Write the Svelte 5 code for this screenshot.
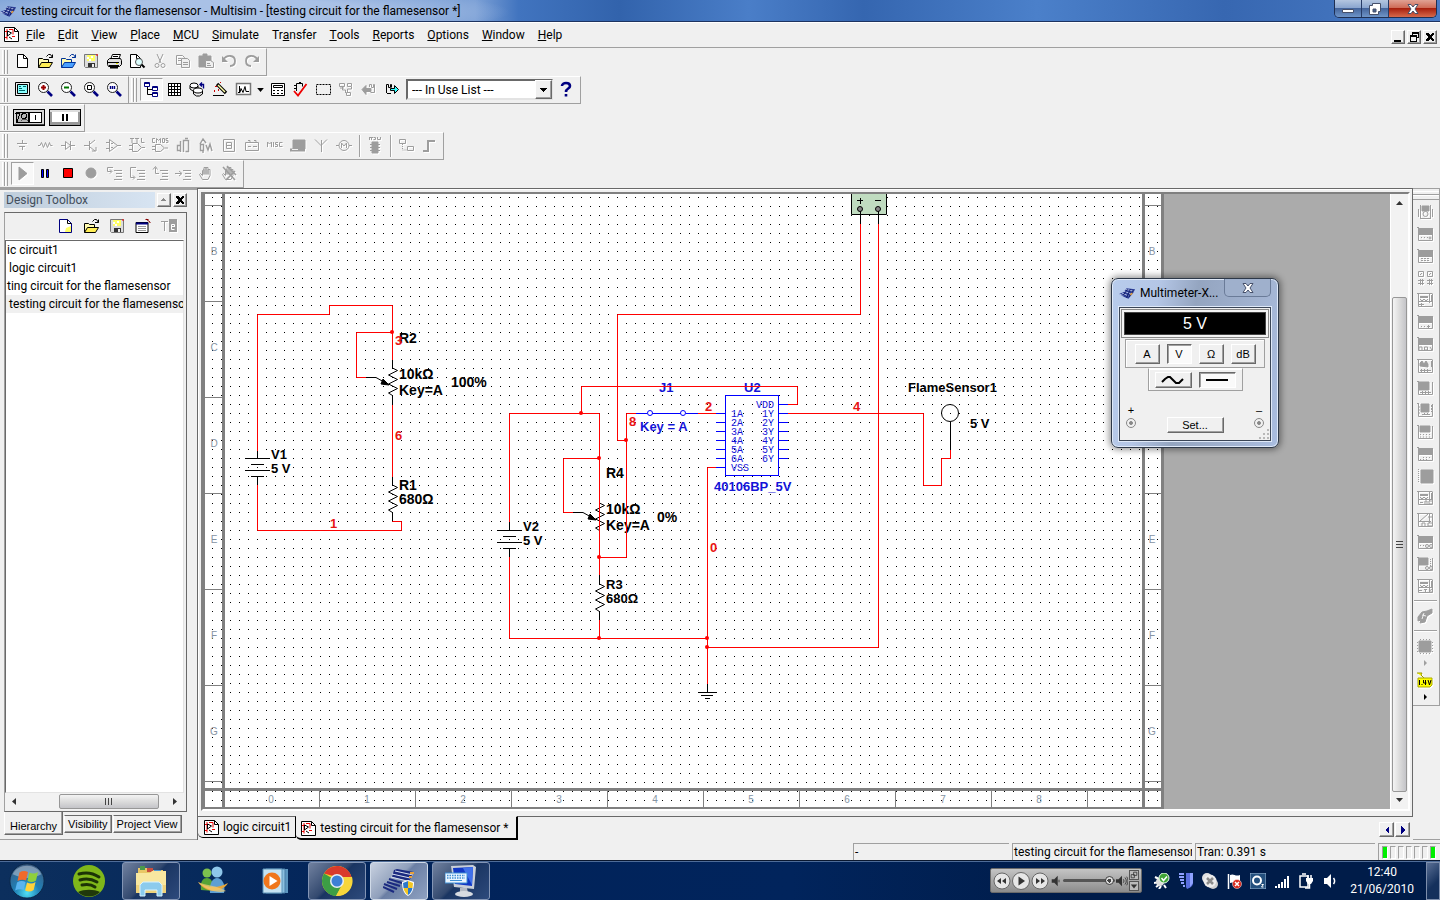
<script lang="ts">
  const menus = [
    ['', 'F', 'ile'],
    ['', 'E', 'dit'],
    ['', 'V', 'iew'],
    ['', 'P', 'lace'],
    ['', 'M', 'CU'],
    ['', 'S', 'imulate'],
    ['Tr', 'a', 'nsfer'],
    ['', 'T', 'ools'],
    ['', 'R', 'eports'],
    ['', 'O', 'ptions'],
    ['', 'W', 'indow'],
    ['', 'H', 'elp'],
  ];

  const lens = '<circle cx="6.5" cy="6.5" r="5" fill="#fff" stroke="#222"/><path d="M10.5 10.5l4.500 4.500" stroke="#000080" stroke-width="2.6"/>';
  const lines = '<path d="M8 5.5h8M10 8.5h6M10 11.5h6M8 14.5h8"/>';
  const hand = '<path d="M4.5 14.5l-3-5 1-1 2 2v-5l1.500-1v5-7h2v7-7h2v7-5h2v6l-2 4z"/>';
  const folder = (front: string, edge: string) =>
    `<path d="M1.500 14.500v-9h4l1 1h5v3" fill="#fffbb0" stroke="${edge}"/><path d="M1.500 14.500l3-5h11l-3 5z" fill="${front}" stroke="${edge}"/><path d="M9.500 3.500l2-2h2l2 3M12 4.500h3.500v-3" stroke="${edge}"/>`;
  const save = '<path d="M1.500 1.500h13v13h-12l-1-1z" fill="#ddd" stroke="#777"/><path d="M4 2h8v6h-8z" fill="#ffff66" stroke="none"/><path d="M4 4h2v2H4zM8 3h2v2H8zM6 6h2v2H6z" fill="#fff" stroke="none"/><path d="M5 10h7v4H5z" fill="#333" stroke="none"/><path d="M9 11h2v3H9z" fill="#eee" stroke="none"/><path d="M14 1v2" stroke="#f00"/>';

  const icons: Record<string, string> = {
    new: '<path d="M3.500 1.500h6l4 4v9h-10z" fill="#fff"/><path d="M9.500 1.500v4h4"/>',
    newBlue: '<path d="M2.500 1.500h8l4 4v9h-12z" fill="#fff" stroke="#000080"/><path d="M9 10l5-2v6H8z" fill="#ffff66" stroke="none"/><path d="M10.500 1.500v4h4"/>',
    open: folder('#ffee55', '#000'),
    openBlue: folder('#4aa0ff', '#003399'),
    save,
    print: '<path d="M4.500 6.500l2-5h8l-2 5" fill="#fff"/><path d="M1.500 7.500l2-2h11l1 2v4l-2 2h-11l-1-2z" fill="#ddd"/><path d="M1 9.500h12M3 12.500h10M7 3.500h5M6 5.500h5"/><path d="M4 14.500h8" stroke-width="2"/><path d="M10 10.500h2" stroke="#dd0"/>',
    preview: '<path d="M1.500 1.500h6l4 4v9h-10z" fill="#fff"/><path d="M7.500 1.500v4h4"/><circle cx="10" cy="9" r="3.500" fill="#dff" stroke="#555"/><path d="M12.500 11.500l3 3" stroke-width="2"/>',
    cut: '<path d="M5 1l4 9M11 1L7 10"/><circle cx="5" cy="12.500" r="2"/><circle cx="11" cy="12.500" r="2"/>',
    copy: '<path d="M1.500 2.500h6l2 2v7h-8z"/><path d="M6.500 5.500h6l2 2v7h-8z" fill="#f0f0f0"/><path d="M3 5.500h3M3 7.500h3M8 9.500h5M8 11.500h5"/>',
    paste: '<path d="M1 3h12v11H1z" fill="currentColor"/><path d="M5 1h4v3H5z" fill="currentColor"/><path d="M7.500 7.500h5l3 2v5h-8z" fill="#f0f0f0"/><path d="M9 10.500h3M9 12.500h4"/>',
    undo: '<path d="M2 7c4-6 12-5 12 1 0 3-2 5-5 5" stroke-width="1.800"/><path d="M1 3v6h6z" fill="currentColor" stroke="none"/>',
    redo: '<path d="M14 7C10 1 2 2 2 8c0 3 2 5 5 5" stroke-width="1.800"/><path d="M15 3v6H9z" fill="currentColor" stroke="none"/>',
    full: '<path d="M1.500 1.500h14v13h-14z" fill="#eee" stroke="#000"/><path d="M3.500 3.500h10v9h-10z" fill="#8ff"/><path d="M5 5.500h2M9 5.500h3M5 7.500h3M5 9.500h6" stroke="#066"/>',
    zoomIn: lens + '<path d="M4 6.500h5M6.500 4v5" stroke="#900" stroke-width="2"/>',
    zoomOut: lens + '<path d="M4 6.500h5" stroke="#070" stroke-width="2"/>',
    zoomArea: lens + '<path d="M4.500 4.500h4v4h-4z"/>',
    zoomFit: lens + '<path d="M4.500 5v3M6.500 5v3M8.500 5v3" stroke="#000080" stroke-width="1.400"/>',
    tree: '<path d="M1.500 1.500h5v4h-5zM9.500 5.500h5v4h-5zM9.500 11.500h5v4h-5z" stroke="#000080" fill="#fff"/><path d="M1 2.500h6M9 6.500h6M9 12.500h6" stroke="#000080"/><path d="M4.500 6v7.500H9M4.500 8.500H9"/>',
    grid: '<path d="M2.500 2.500h12v12h-12z" fill="#fff"/><path d="M2 2.500h13M2 5.500h13M2 8.500h13M2 11.500h13M2 14.500h13M2.500 2v13M5.500 2v13M8.500 2v13M11.500 2v13M14.500 2v13"/>',
    database: '<ellipse cx="5" cy="4.500" rx="4" ry="2.500" fill="#fff"/><path d="M1 5v3l3 2M9 5v2"/><ellipse cx="9" cy="9.500" rx="4.500" ry="2.500" fill="#fff"/><path d="M4.500 10v3l3 2h3l3-2v-3"/><path d="M11 3.500h3.500v4M13 1.500l-2 2 2 2" stroke="#000080" stroke-width="1.400"/>',
    wizard: '<path d="M5 3l9 9" stroke="#000" stroke-width="3.400"/><path d="M6 4l7 7" stroke="#ffa" stroke-width="1.400"/><path d="M2.500 9v2M6.500 8v2M3 5.500h2M8 1.500h1" stroke="#c00"/><path d="M1 14.500h11"/>',
    graph: '<path d="M1.500 2.500h14v11h-14z" fill="#fff" stroke="#777" stroke-width="1.500"/><path d="M3 11.500h2l1-4 2 4 2-6 1 5h3M4.500 5v6"/>',
    calc: '<path d="M2.500 2.500h13v12h-13z" fill="#fff"/><path d="M4.500 4.500h9v2h-9zM4 9.500h2M8 9.500h2M12 9.500h2M4 12.500h2M8 12.500h2M12 12.500h2"/>',
    check: '<path d="M4.500 10V2.500h6v3M4 4.500H2M4 7.500H2M7 1.500h2"/><path d="M2 10l4 4.500L14.500 3" stroke="#e00" stroke-width="1.800"/>',
    area: '<path d="M1.500 3.500h14v10h-14z" stroke-dasharray="2 1"/>',
    swap: '<path d="M1.500 2.500h5v3h-5zM9.500 2.500h4v3h-4zM8.500 11.500h4v3h-4zM4.500 6v3h3v3M13.500 6v2h-4v3M2 7h4"/>',
    back: '<path d="M1 8.500l4-4v3h5v3H5v3z" fill="currentColor"/><path d="M8.500 6V3.500h2v3h2v-3h1v8h-4"/>',
    forward: '<path d="M2.500 12V3.500h2v3h2v-3h1v3M3 12.500h4"/><path d="M6.500 7.500h4v-3l4 4-4 4v-3h-4z" fill="#3ff"/>',
    help: '<path d="M4 5c0-4 8-4 8 0 0 3-4 2-4 6M8 13v2.500" stroke="#000080" stroke-width="2.600"/>',
    source: '<path d="M3 6.500h10M5 9.500h6M8.500 3v4M8.500 10v3"/>',
    resistor: '<path d="M1 8.500h2l1.500-3 2 5 2-5 2 5 2-5 1 3h2"/>',
    diode: '<path d="M1 8.500h4M11 8.500h4M10.500 4v9M5.500 4.500v8l5-4z"/>',
    transistor: '<path d="M1 8.500h5M6.500 4v9M7 7l5-4M7 10l5 4M9 14h4v-4"/>',
    opamp: '<path d="M3.500 2.500v12l8-6zM0 5.500h3M0 11.500h3M11 8.500h4M5 6.500h2M5 10.500h2"/>',
    ttl: '<path d="M1 1.500h4M3 2v4M6 1.500h4M8 2v4M12.500 1v4.500h3M3.500 6.500v8h5l4-4-4-4zM0 8.500h3M0 12.500h3M13 10.500h3"/>',
    cmos: '<path d="M3 1.500H.500v4H3M4.500 6V1.500l2 2 2-2V6M10.500 1.500h2v4h-2zM16 1.500h-2v2h2v2h-2M3.500 7.500v7h5l4-3.500-4-3.500zM0 9.500h3M0 12.500h3M13 11h3"/>',
    misc1: '<path d="M2.500 8.500h3v5h-3zM5.500 4v11M8.500 15V3.500h5v11h-3M10 1.500h3" stroke-width="1.400"/>',
    mixed: '<path d="M2 7l3-5 3 4M2.500 7.500h3v6h-3zM8 8l2 5 2-6 2 7M5 14v2" stroke-width="1.400"/>',
    indicator: '<path d="M2.500 2.500h11v12h-11zM5.500 5.500h5v6h-5zM6 8.500h4"/>',
    power: '<path d="M1.500 5.500h13v8h-13zM4 3.500h2v2M10 3.500h2v2M4 9.500h3M9 9.500h4"/>',
    miscText: '<path d="M.500 10V5l2 2 2-2v5M6.500 5v5M11 5.500H8.500v2h2v2H8M15.500 5.500h-3v4h3" />',
    panel: '<path d="M3 3h12v9H3z" fill="currentColor"/><path d="M0 13h15" stroke-width="3"/><path d="M2 12.500h6" stroke="#f0f0f0"/>',
    antenna: '<path d="M2 2.500l6 6 6-6M8.500 3v12"/>',
    motor: '<circle cx="8" cy="8.500" r="5"/><path d="M0 8.500h3M13 8.500h3M5.500 11V6l2.500 3 2.500-3v5"/>',
    mcu: '<path d="M2.500 3V.500h2V3M6.500.500h2v2h-2M10.500 0v2.500h3V0M2 .500h4"/><path d="M5 5h6v11H5z" fill="currentColor"/><path d="M3 7.500h10M3 10.500h10M3 13.500h10"/>',
    block: '<path d="M1.500 2.500h6v4h-6zM9.500 9.500h6v4h-6z"/><path d="M4.500 7v6H9" stroke-dasharray="1 1"/>',
    bus: '<path d="M2 14h5V4h7" stroke-width="2"/>',
    play: '<path d="M5 2v13l8-6.500z" fill="currentColor"/>',
    pause: '<path d="M4.500 4.500h2v8h-2zM9.500 4.500h2v8h-2z" fill="#00f"/>',
    stop: '<path d="M3.500 3.500h9v9h-9z" fill="#f00"/>',
    record: '<circle cx="8" cy="8" r="5" fill="currentColor"/>',
    stepInto: lines + '<path d="M7 2.500H1.500v4h4M4 4.500l2 2-2 2"/>',
    stepOver: lines + '<path d="M7 2.500H1.500v10h4M4 10.500l2 2-2 2"/>',
    stepOut: lines + '<path d="M7 8.500H3.500v-6M1 4.500l2.500-3 2 3"/>',
    runTo: lines + '<path d="M0 8.500h6M4 6l3 2.500L4 11"/>',
    hand,
    handOff: hand + '<path d="M2 2l12 13M6 1l9 9M14 6L5 15" stroke-width="1.600"/>',
    saveTree: save,
    rename: '<path d="M1 4.500h12v10H1z" fill="#fff" stroke="#000"/><path d="M1 5.500h12" stroke="#000080" stroke-width="2"/><path d="M3 8.500h8M3 10.500h8M3 12.500h8" stroke="#999"/><path d="M10.500 1.500h3M11 1l4 3v1" stroke="#800"/>',
    text: '<path d="M0 3.500h7M3.500 4v9"/><path d="M8 1h8v13H8z" fill="currentColor" stroke="none"/><path d="M10 8.500h4M13.500 8V6.500h-3v5h3" stroke="#fff"/>',
    sheet: '<path d="M1.500 1.500h10l4 4v10h-14z" fill="#fff"/><path d="M11.500 1.500v4h4"/><path d="M2 5.500h2v8M6 3.500h4v5M9 10.500h3M4 3v3M2 11.500h2" stroke="#e00"/><path d="M4.500 5l4 2-4 3zM6 11l3 2"/>',
    probe: '<path d="M0 1h5L4 3l3 3" stroke="#990" fill="#ff0"/><path d="M1 6h14v7l-2 2H1z" fill="#ff0" stroke="#aa0"/><path d="M2.500 8v5M4.500 12.500h1M8.500 8v5M6.500 8v3h3M11 8l1.500 5L14 8" />',
    clip: '<path d="M1 9l4-5 5-1 5-2v4l-5 3-2 6-5 1 1-3-3 1z" fill="currentColor"/><path d="M5 7l4 1M7 5l-2 6" stroke="#f0f0f0"/>',
    chip: '<path d="M2 3h12v11H2z" fill="currentColor"/><path d="M3 1.500h11M3 15.500h11" stroke-dasharray="1 2"/><path d="M.500 4v10M15.500 4v10" stroke-dasharray="1 2"/>',
  };

  // Body of each instrument: solid screen plus the knob rows under it
  const box = '<path d="M1.500 2v12.500h14V2M0 1.500h2"/>';
  const screen = '<path d="M1 2h15v7H1z" fill="currentColor" stroke="none"/>';
  const mesh = '<path d="M1.500 1.500h14M3 4l2 2 2-2 2 2 2-2M3 7l2 2 2-2 2 2 2-2M2 9.500h13M12.500 2v9M14.500 3v7M3 6l2-2 2 2 2-2 2 2" />';
  const instruments = [
    { name: 'Multimeter', art: '<path d="M1.500 5v8M15.500 5v8M3.500 1v13M13.500 1v13"/><path d="M5 2h7v5H5z" fill="currentColor"/><circle cx="8.500" cy="10" r="2.500"/><path d="M3 14.500h11"/>' },
    { name: 'Function generator', art: box + screen + '<path d="M4 11.500h7" stroke-dasharray="1 2"/><circle cx="13" cy="12" r="1"/>' },
    { name: 'Wattmeter', art: box + screen + '<path d="M4 10.500h9M4 12.500h9" stroke-dasharray="2 1"/>' },
    { name: 'Oscilloscope', art: '<path d="M1.500 1.500h5v5h-5zM10.500 1.500h5v5h-5zM3 5l2-2M12 5l2-2M1 10.500h6M1 13.500h6M10 10.500h6M10 13.500h6M3.500 9v6M5.500 9v6M12.500 9v6M14.500 9v6"/>' },
    { name: 'Four channel oscilloscope', art: box + mesh + '<path d="M2 12.500h5M4.500 11v3"/>' },
    { name: 'Bode plotter', art: box + screen + '<path d="M4 12.500h4" stroke-dasharray="1 2"/><path d="M10 12.500h3M11.500 11v3"/>' },
    { name: 'Frequency counter', art: box + screen + '<path d="M2 14v-3h3v3M7.500 11h3v3h-3zM13 11l2 3"/>' },
    { name: 'Word generator', art: box + '<path d="M1.500 1.500h14"/><path d="M3 8V5l2-2 2 3 2-3 2 3v3z" fill="currentColor"/><path d="M3 12.500h11M4.500 11v3M7.500 11v3M10.500 11v3M14.500 3v6"/>' },
    { name: 'Logic analyzer', art: box + '<path d="M2 2h10v8H2z" fill="currentColor"/><path d="M3 12.500h11M5.500 11v3M8.500 11v3M11.500 11v3"/>' },
    { name: 'Logic converter', art: box + '<path d="M4 2h8v8H4z" fill="currentColor"/><path d="M2 4v9M5 12.500h9M7.500 11v3M10.500 11v3M14.500 3v7" stroke-dasharray="2 1"/>' },
    { name: 'IV analyzer', art: box + '<path d="M3 2h10v6H3z" fill="currentColor"/><path d="M3 10.500h11M3 13h11" stroke-dasharray="1 2"/>' },
    { name: 'Distortion analyzer', art: box + screen + '<path d="M6 11.500h9M3 13.500h9" stroke-dasharray="1 2"/>' },
    { name: 'Spectrum analyzer', art: '<path d="M4 2h12v13H4z" fill="currentColor"/><path d="M1.500 1v14" stroke-dasharray="1 1"/>' },
    { name: 'Network analyzer', art: box + mesh + '<path d="M3 12.500h3M8 14v-3h2v3M15 11h-3v3h3"/>' },
    { name: 'Agilent generator', art: box + '<path d="M1.500 1.500h14M3 9l8-7M2 9.500h12M12.500 2v9M15 5h-4M5 14v-3h3v3M15 11h-4v3h4"/>' },
    { name: 'Agilent multimeter', art: box + screen + '<path d="M3 11.500h4" stroke-dasharray="1 2"/><circle cx="10" cy="12" r="1.500"/><circle cx="14" cy="12" r="1.500"/>' },
    { name: 'Agilent oscilloscope', art: box + '<path d="M2 2h9v7H2z" fill="currentColor"/><path d="M13.500 3v7" stroke-dasharray="1 1"/><circle cx="10" cy="12" r="1.500"/><circle cx="14" cy="12" r="1.500"/>' },
    { name: 'Tektronix oscilloscope', art: box + mesh + '<path d="M2 12.500h3M7 11.500h3M8.500 11v3M12.500 11v4M15 11l-2 1.500 2 2"/>' },
  ];

  type Tool = { icon: string; label: string; off?: boolean; down?: boolean; sep?: boolean };
  const t = (icon: string, label: string, extra: Partial<Tool> = {}): Tool => ({ icon, label, ...extra });
  const off = { off: true };

  const standard = [
    t('new', 'New'), t('open', 'Open'), t('openBlue', 'Open sample'), t('save', 'Save'), t('print', 'Print'),
    t('preview', 'Print preview'), t('cut', 'Cut', off), t('copy', 'Copy', off), t('paste', 'Paste', off),
    t('undo', 'Undo', off), t('redo', 'Redo', off),
  ];
  const zoom = [
    t('full', 'Full screen'), t('zoomIn', 'Zoom in'), t('zoomOut', 'Zoom out'), t('zoomArea', 'Zoom area'), t('zoomFit', 'Zoom to fit'),
  ];
  const mainLeft = [
    t('tree', 'Design toolbox', { down: true }), t('grid', 'Spreadsheet'), t('database', 'Database manager'),
    t('wizard', 'Create component'), t('graph', 'Grapher'),
  ];
  const mainRight = [
    t('calc', 'Postprocessor'), t('check', 'Electrical rules check'), t('area', 'Capture screen area'),
    t('swap', 'Go to parent sheet', off), t('back', 'Back annotate', off), t('forward', 'Forward annotate'),
  ];
  const components = [
    t('source', 'Source', off), t('resistor', 'Basic', off), t('diode', 'Diode', off), t('transistor', 'Transistor', off),
    t('opamp', 'Analog', off), t('ttl', 'TTL', off), t('cmos', 'CMOS', off), t('misc1', 'Misc digital', off),
    t('mixed', 'Mixed', off), t('indicator', 'Indicator', off), t('power', 'Power', off), t('miscText', 'Misc', off),
    t('panel', 'Advanced peripherals', off), t('antenna', 'RF', off), t('motor', 'Electromechanical', off),
    t('mcu', 'MCU', { off: true, sep: true }), t('block', 'Hierarchical block', { off: true, sep: true }), t('bus', 'Bus', off),
  ];
  const simulation = [
    t('play', 'Run', { off: true, down: true }), t('pause', 'Pause'), t('stop', 'Stop'), t('record', 'Pause at next instruction', off),
    t('stepInto', 'Step into', off), t('stepOver', 'Step over', off), t('stepOut', 'Step out', off),
    t('runTo', 'Run to cursor', off), t('hand', 'Toggle breakpoint', off), t('handOff', 'Remove breakpoints', off),
  ];
  const treeTools = [
    t('newBlue', 'New'), t('open', 'Open'), t('saveTree', 'Save'), t('rename', 'Close'), t('text', 'Rename', off),
  ];

  const treeRows = [
    { text: 'ic circuit1', sheet: false },
    { text: 'logic circuit1', sheet: true },
    { text: 'ting circuit for the flamesensor', sheet: false },
    { text: 'testing circuit for the flamesensor', sheet: true },
  ];
  let selectedRow = $state(3);

  const dockTabs = ['Hierarchy', 'Visibility', 'Project View'];
  let dockTab = $state('Hierarchy');

  const sheets = ['logic circuit1', 'testing circuit for the flamesensor *'];
  let sheet = $state(1);

  const rowMarks = ['B', 'C', 'D', 'E', 'F', 'G'].map((name, i) => ({ name, y: 251 + i * 96 }));
  const colMarks = [0, 1, 2, 3, 4, 5, 6, 7, 8].map((name) => ({ name, x: 271 + name * 96 }));

  const wires = [
    'M257.5 451V314.5H329.5V305.5H392.5V360',
    'M392.5 332.5H356.5V377.5H366',
    'M392.5 405V477',
    'M392.5 521V521.5H401.5V530.5H257.5V485',
    'M509.5 522V413.5H599.5V575',
    'M599.5 458.5H563.5V512.5H573',
    'M581.5 413V386.5H797.5V404.5H788',
    'M599.5 557.5H626.5V413.5H636',
    'M698 413.5H716',
    'M509.5 557V638.5H707.5',
    'M599.5 620V638',
    'M716 467.5H707.5V684',
    'M707.5 647.5H878.5V224',
    'M860.5 224V314.5H617.5V440.5H626',
    'M788 413.5H923.5V485.5H941.5V458.5H950.5V450',
  ];
  const joints = [[392, 332], [581, 413], [599, 458], [626, 440], [599, 557], [599, 638], [707, 638], [707, 647]];
  const zigzag = 'l5 2.500-9 4.500 9 4.500-9 4.500 9 4.500-9 4.500 4 2.500';
  const netNames = [
    ['3', 395, 345], ['6', 395, 440], ['1', 330, 528], ['2', 705, 411],
    ['8', 629, 426], ['4', 853, 411], ['0', 710, 552],
  ];
  const bigLabels = [
    ['R2', 399, 343], ['10kΩ', 399, 379], ['Key=A', 399, 395], ['100%', 451, 387], ['R1', 399, 490], ['680Ω', 399, 504],
    ['R4', 606, 478], ['10kΩ', 606, 514], ['Key=A', 606, 530], ['0%', 657, 522],
  ];
  const labels = [
    ['V1', 271, 459], ['5 V', 271, 473], ['V2', 523, 531], ['5 V', 523, 545], ['R3', 606, 589], ['680Ω', 606, 603],
    ['FlameSensor1', 908, 392], ['5 V', 970, 428],
  ];
  const blueLabels = [['J1', 659, 392], ['U2', 744, 392], ['Key = A', 640, 431], ['40106BP_5V', 714, 491]];
  const leftPins = ['1A', '2A', '3A', '4A', '5A', '6A', 'VSS'];
  const rightPins = ['VDD', '1Y', '2Y', '3Y', '4Y', '5Y', '6Y'];

  let mode = $state('V');
  let coupling = $state('DC');
  let volume = $state(97);
</script>

{#snippet icon(name: string)}
  <svg class="ico" viewBox="0 0 17 17" aria-hidden="true">{@html icons[name]}</svg>
{/snippet}

{#snippet tools(items: Tool[])}
  {#each items as item}
    {#if item.sep}<span class="sep"></span>{/if}
    <button class="tool" class:off={item.off} class:down={item.down} aria-label={item.label}>
      {@render icon(item.icon)}
    </button>
  {/each}
{/snippet}

{#snippet logo()}
  <svg class="logo" viewBox="0 0 18 16" aria-hidden="true">
    <path d="M0 9l5-2 3-4 9 1-2 4-5 6-5-2z" fill="#2b3c96" />
    <path d="M0 9l5 2M3 8l7 3M5 6l8 3M7 4l8 2" stroke="#b9c6e8" fill="none" />
    <path d="M9 4l-5 7M12 4l-4 9M15 5l-4 7" stroke="#101c66" fill="none" />
    <path d="M12 10l2-2" stroke="#e8a13a" stroke-width="1.500" />
  </svg>
{/snippet}

<div class="screen">
  <header class="titlebar">
    {@render logo()}
    <h1>testing circuit for the flamesensor - Multisim - [testing circuit for the flamesensor *]</h1>
    <div class="caption">
      <button aria-label="Minimize"><svg viewBox="0 0 14 14"><path d="M1.500 7.500h11v3h-11z" /></svg></button>
      <button aria-label="Restore"><svg viewBox="0 0 14 14"><path d="M4.500 1.500h8v8h-2v3h-9v-9h3z" /><path class="hole" d="M5 7h3v3H5z" /></svg></button>
      <button class="close" aria-label="Close"><svg viewBox="0 0 14 14"><path d="M2 2.500h3l2 2.500 2-2.500h3L9 7l3 4.500H9L7 9l-2 2.500H2L5 7z" /></svg></button>
    </div>
  </header>

  <nav class="menubar">
    <span class="doc">{@render icon('sheet')}</span>
    {#each menus as [pre, key, post]}
      <button class="menu">{pre}<u>{key}</u>{post}</button>
    {/each}
    <div class="child">
      <button class="raised" aria-label="Minimize sheet"><svg viewBox="0 0 12 12"><path d="M2 9h7v2H2z" /></svg></button>
      <button class="raised" aria-label="Restore sheet"><svg viewBox="0 0 12 12"><path d="M4 1h7v6H9v4H2V4h2zM5 3v1h4v2h1V3zM3 6v4h5V6z" fill-rule="evenodd" /></svg></button>
      <button class="raised" aria-label="Close sheet"><svg viewBox="0 0 12 12"><path d="M2 2h2l2 2 2-2h2v1L7.500 6 10 9v1H8L6 8l-2 2H2V9l2.500-3L2 3z" /></svg></button>
    </div>
  </nav>

  <div class="row"><div class="bar" role="toolbar" aria-label="Standard">{@render tools(standard)}</div></div>
  <div class="row">
    <div class="bar" role="toolbar" aria-label="View">{@render tools(zoom)}</div>
    <div class="bar" role="toolbar" aria-label="Main">
      {@render tools(mainLeft)}
      <button class="more" aria-label="Grapher list"><svg viewBox="0 0 5 3"><path d="M0 0h5L2.500 3z" /></svg></button>
      {@render tools(mainRight)}
      <div class="combo">
        <select aria-label="In use list"><option>--- In Use List ---</option></select>
        <span class="drop raised"><svg viewBox="0 0 7 4"><path d="M0 0h7L3.500 4z" /></svg></span>
      </div>
      {@render tools([t('help', 'Help')])}
    </div>
  </div>
  <div class="row">
    <div class="bar switches" role="toolbar" aria-label="Simulation switch">
      <button aria-label="Run switch">
        <svg viewBox="0 0 32 17"><path d="M.500.500h31v16H.500z" fill="#d8d8d8" stroke="#000" /><path d="M1 15.500h30" stroke="#444" /><path d="M3.500 3.500h12v10h-12z" fill="#b8b8b8" stroke="#000" /><path d="M4 13l3-9M2 4h4" stroke="#000" /><circle cx="11" cy="7" r="2.500" fill="none" stroke="#000" /><path d="M8 12l2-2h3l2 2" fill="none" stroke="#555" /><path d="M16.500 3.500h12v10h-12z" fill="#fff" stroke="#000" /><path d="M22.500 6v5" stroke="#000" /></svg>
      </button>
      <button aria-label="Pause switch">
        <svg viewBox="0 0 32 17"><path d="M.500.500h31v16H.500z" fill="#999" stroke="#000" /><path d="M1 1h30v2H1z" fill="#ddd" /><path d="M3 3h26v10H3z" fill="#fff" /><path d="M13 5h2v7h-2zM17 5h2v7h-2z" fill="#000" /></svg>
      </button>
    </div>
  </div>
  <div class="row"><div class="bar" role="toolbar" aria-label="Components">{@render tools(components)}</div></div>
  <div class="row"><div class="bar" role="toolbar" aria-label="Simulation">{@render tools(simulation)}</div></div>

  <main class="work">
    <aside class="dock">
      <div class="dock-title">
        <h2>Design Toolbox</h2>
        <button class="raised" aria-label="Collapse"><svg viewBox="0 0 12 12"><path d="M3 7h5L5.500 4z" fill="#888" /></svg></button>
        <button class="raised" aria-label="Close toolbox"><svg viewBox="0 0 12 12"><path d="M2 2h2l2 2 2-2h2v1L7.500 6 10 9v1H8L6 8l-2 2H2V9l2.500-3L2 3z" /></svg></button>
      </div>
      <div class="dock-box">
        <div class="dock-tools" role="toolbar" aria-label="Toolbox">{@render tools(treeTools)}</div>
        <ul class="tree">
          {#each treeRows as row, i}
            <li>
              <button class:sheet={row.sheet} class:selected={i === selectedRow} onclick={() => (selectedRow = i)}>{row.text}</button>
            </li>
          {/each}
        </ul>
        <div class="hscroll">
          <svg viewBox="0 0 4 7"><path d="M4 0v7L0 3.500z" /></svg>
          <span class="thumb"><i></i><i></i><i></i></span>
          <svg viewBox="0 0 4 7"><path d="M0 0v7l4-3.500z" /></svg>
        </div>
      </div>
      <div class="dock-tabs" role="tablist">
        {#each dockTabs as name}
          <button role="tab" aria-selected={name === dockTab} class:current={name === dockTab} onclick={() => (dockTab = name)}>{name}</button>
        {/each}
      </div>
    </aside>

    <section class="mdi">
      <div class="frame">
        <div class="canvas">
          <svg class="page" viewBox="203 194 961 615">
            <defs>
              <pattern id="dots" x="5" y="8" width="9" height="9" patternUnits="userSpaceOnUse">
                <rect width="1" height="1" fill="#000" />
              </pattern>
            </defs>
            <rect x="203" y="194" width="961" height="615" fill="#fff" />
            <rect x="205" y="194" width="956" height="613" fill="url(#dots)" />
            <g class="border">
              <path d="M203 194h2v615h-2zM222 194h3v613h-3zM1142 194h3v613h-3zM1161 194h3v615h-3zM203 788h959v3H203zM203 807h961v2H203z" />
              {#each [205, 301, 397, 493, 589, 685, 781] as y}
                <path d="M205 {y}h17v1h-17zM1145 {y}h16v1h-16z" />
              {/each}
              {#each [319, 415, 511, 607, 703, 799, 895, 991, 1087] as x}
                <path d="M{x} 791h1v16h-1z" />
              {/each}
            </g>
            <g class="mark">
              {#each rowMarks as mark}
                <text x="214" y={mark.y + 4}>{mark.name}</text>
                <text x="1152" y={mark.y + 4}>{mark.name}</text>
              {/each}
              {#each colMarks as mark}
                <text x={mark.x} y="803">{mark.name}</text>
              {/each}
            </g>

            <g class="part">
              <path d="M851.5 190V214.500H886.500V190z" fill="#c0dcc0" />
              <path d="M857 200.500h6M860.500 198v6M875 200.500h6M860.500 209V224M878.500 209V224" />
              <circle cx="860" cy="209" r="2.500" fill="#888" />
              <circle cx="878" cy="209" r="2.500" fill="#888" />
              {#each [[0, 0], [252, 72]] as [dx, dy]}
                <path transform="translate({dx} {dy})" d="M257.5 450V458M245 458.500H270M251 464.500H264M245 470.500H270M251 476.500H264M257.5 477V485" />
              {/each}
              <path d="M392.5 360V368{zigzag}V405M392.5 477V485{zigzag}V521M599.5 575V584{zigzag}V620M599.5 503{zigzag}" />
              {#each [[0, 0], [207, 135]] as [dx, dy]}
                <g transform="translate({dx} {dy})">
                  <path d="M366 377.500H376L384 382" />
                  <path class="arrow" d="M383 379L389 385L381 384z" />
                </g>
              {/each}
              <path d="M707.5 684V692M698 692.500H717M701 695.500H713M705 698.500H710" />
              <path d="M950.5 422V450" />
              <circle cx="950" cy="413" r="8.500" fill="none" />
            </g>
            <g class="labels big">
              {#each bigLabels as [text, x, y]}<text {x} {y}>{text}</text>{/each}
            </g>
            <g class="labels">
              {#each labels as [text, x, y]}<text {x} {y}>{text}</text>{/each}
            </g>
            <g class="labels blue">
              {#each blueLabels as [text, x, y]}<text {x} {y}>{text}</text>{/each}
            </g>
            <g class="labels net">
              {#each netNames as [text, x, y]}<text {x} {y}>{text}</text>{/each}
            </g>
            <g class="chip">
              <rect x="725.5" y="395.5" width="53" height="80" />
              <path d="M636 413.500H647M652 413.500H681M686 413.500H698" />
              {#each leftPins as pin, i}
                <path d="M716 {413.5 + i * 9}H725" />
                <text x="731" y={417 + i * 9}>{pin}</text>
              {/each}
              {#each rightPins as pin, i}
                <path d="M779 {404.5 + i * 9}H788" />
                <text class="end" x="774" y={408 + i * 9}>{pin}</text>
              {/each}
            </g>
            <g class="wire">
              {#each wires as d}<path {d} />{/each}
              {#each joints as [x, y]}<circle cx={x} cy={y} r="2" />{/each}
            </g>
            <g class="contact">
              <circle cx="650" cy="413" r="2.500" />
              <circle cx="683" cy="413" r="2.500" />
            </g>
          </svg>
          <div class="vscroll">
            <svg viewBox="0 0 7 4"><path d="M0 4h7L3.500 0z" /></svg>
            <span class="thumb"><i></i><i></i><i></i></span>
            <svg viewBox="0 0 7 4"><path d="M0 0h7L3.500 4z" /></svg>
          </div>
        </div>
      </div>
      <div class="sheets">
        <div class="sheet-tabs" role="tablist">
          {#each sheets as name, i}
            <button role="tab" aria-selected={i === sheet} class:current={i === sheet} onclick={() => (sheet = i)}>
              {@render icon('sheet')}{name}
            </button>
          {/each}
        </div>
        <div class="pager">
          <button class="raised" aria-label="Previous sheet"><svg viewBox="0 0 12 12"><path d="M8 2v8L4 6z" fill="#000080" /></svg></button>
          <button class="raised" aria-label="Next sheet"><svg viewBox="0 0 12 12"><path d="M4 2v8l4-4z" fill="#000080" /></svg></button>
        </div>
      </div>

      <div class="meter" role="dialog" aria-label="Multimeter-XMM1">
        <div class="meter-title">
          {@render logo()}
          <span>Multimeter-X...</span>
          <button aria-label="Close multimeter"><svg viewBox="0 0 14 14"><path d="M2 2.500h3l2 2.500 2-2.500h3L9 7l3 4.500H9L7 9l-2 2.500H2L5 7z" /></svg></button>
        </div>
        <div class="meter-body">
          <output class="display">5 V</output>
          <div class="group">
            {#each ['A', 'V', 'Ω', 'dB'] as name}
              <button class="raised" class:pressed={mode === name} onclick={() => (mode = name)}>{name}</button>
            {/each}
          </div>
          <div class="group wave">
            <button class="raised" class:pressed={coupling === 'AC'} aria-label="AC" onclick={() => (coupling = 'AC')}>
              <svg viewBox="0 0 24 10"><path d="M1 7l3-3 3-2h2l3 3 3 3h3l4-4" /></svg>
            </button>
            <button class="raised" class:pressed={coupling === 'DC'} aria-label="DC" onclick={() => (coupling = 'DC')}>
              <svg viewBox="0 0 24 10"><path d="M1 5h22" /></svg>
            </button>
          </div>
          <div class="terminals">
            <div class="terminal"><span>+</span><svg viewBox="0 0 12 12"><circle cx="6" cy="6" r="4.500" /><circle class="pin" cx="6" cy="6" r="1.500" /></svg></div>
            <button class="raised set">Set...</button>
            <div class="terminal"><span>–</span><svg viewBox="0 0 12 12"><circle cx="6" cy="6" r="4.500" /><circle class="pin" cx="6" cy="6" r="1.500" /></svg></div>
          </div>
          <svg class="grip" viewBox="0 0 12 12"><path d="M9 1h2v2H9zM9 5h2v2H9zM9 9h2v2H9zM5 5h2v2H5zM5 9h2v2H5zM1 9h2v2H1z" /></svg>
        </div>
      </div>
    </section>

    <div class="instruments">
      <div class="inst-bar" role="toolbar" aria-label="Instruments">
        {#each instruments as item}
          <button class="inst" aria-label={item.name}><svg class="ico" viewBox="0 0 17 17">{@html item.art}</svg></button>
        {/each}
        <hr />
        <button class="inst" aria-label="Current probe">{@render icon('clip')}</button>
        <hr />
        <button class="inst" aria-label="LabVIEW instruments">{@render icon('chip')}</button>
        <button class="fly" aria-label="LabVIEW list"><svg viewBox="0 0 3 6"><path d="M0 0v6l3-3z" /></svg></button>
        <button class="inst live" aria-label="Measurement probe">{@render icon('probe')}</button>
        <button class="fly live" aria-label="Probe list"><svg viewBox="0 0 3 6"><path d="M0 0v6l3-3z" /></svg></button>
      </div>
    </div>
  </main>

  <footer class="status">
    <span class="pane">-</span>
    <span class="pane">testing circuit for the flamesensor:</span>
    <span class="pane">Tran: 0.391 s</span>
    <span class="pane leds">
      {#each [true, false, false, false, false, false, true] as lit}<i class:lit></i>{/each}
    </span>
  </footer>

  <div class="taskbar">
    <button class="start" aria-label="Start">
      <svg viewBox="0 0 40 40">
        <defs>
          <radialGradient id="orb" cx="50%" cy="85%" r="80%">
            <stop offset="0" stop-color="#4fe0f5" /><stop offset=".45" stop-color="#1f7fb5" /><stop offset="1" stop-color="#3c5f86" />
          </radialGradient>
        </defs>
        <circle cx="20" cy="20" r="18" fill="url(#orb)" stroke="#0b2748" />
        <path d="M5 13c5-12 25-12 30 0-8 5-20 5-30 0z" fill="#fff" opacity=".35" />
        <path d="M12 11c3-2 6-2 9-.500l-2 9c-3-1.500-6-1-9 .500z" fill="#f06a2a" />
        <path d="M22.500 11c3 1.500 6 1.500 9-.500l-2 9c-3 2-6 2-9 .500z" fill="#8fd03c" />
        <path d="M9.500 21.500c3-2 6-2 9-.500l-2 8.500c-3-1.500-6-1-9 .500z" fill="#59b4f0" />
        <path d="M20 21.500c3 1.500 6 1.500 9-.500l-2 8.500c-3 2-6 2-9 .500z" fill="#ffd23a" />
      </svg>
    </button>
    <button class="app first" aria-label="Spotify">
      <svg viewBox="0 0 32 32"><circle cx="16" cy="16" r="16" fill="#7fb71a" /><path d="M6 9c7-2 14-1 20 3M7 15c6-2 12-1 17 2M9 20c5-1 9-1 13 2" stroke="#1c3306" stroke-width="3" stroke-linecap="round" fill="none" /><path d="M5 27c6-3 16-3 22 0-6 6-16 6-22 0z" fill="#20380a" /></svg>
    </button>
    <button class="app open" aria-label="Windows Explorer">
      <svg viewBox="0 0 32 32"><path d="M3 3h9l2 2h14v22H3z" fill="#e9c766" /><path d="M5 1h5v4H5z" fill="#4a9a4a" /><path d="M12 3h6v4h-6z" fill="#c94d3d" /><path d="M19 5h7v4h-7z" fill="#4f9ad8" /><path d="M1 8h14l2-2h14v22H1z" fill="#f8e7a0" /><path d="M1 20h30v8H1z" fill="#efd27a" /><path d="M5 31V20l3-3h16l3 3v11h-5v-6H10v6z" fill="#8ccbed" stroke="#d8f2ff" /></svg>
    </button>
    <button class="app" aria-label="Messenger">
      <svg viewBox="0 0 32 32"><circle cx="10" cy="8" r="4.500" fill="#7cc04e" /><path d="M4 25c-1-9 2-12 6-12s7 4 7 13z" fill="#56a336" /><circle cx="20" cy="7" r="5.500" fill="#8fc7ea" /><path d="M13 28c-1-10 3-15 7-15s9 5 7 15z" fill="#5d9fd3" /><path d="M1 17c9 6 19 7 30 1-5 9-21 12-30-1z" fill="#e6a63a" /><path d="M1 17c9 4 18 3 28 9-8 3-20-1-28-9z" fill="#f4cf73" opacity=".7" /></svg>
    </button>
    <button class="app" aria-label="Media Player">
      <svg viewBox="0 0 32 32"><path d="M10 4h19v24H10z" fill="#5c96c0" /><path d="M7 4h19v24H7z" fill="#8cc0e0" stroke="#487fa8" /><path d="M4 4h19v24H4z" fill="#c5e3f3" stroke="#5c93b8" /><circle cx="13" cy="16" r="8.500" fill="#f0761c" /><path d="M10.500 11v10l8-5z" fill="#fff" /></svg>
    </button>
    <button class="app open" aria-label="Chrome">
      <svg viewBox="0 0 32 32"><circle cx="16" cy="16" r="15" fill="#f7cf2b" /><path d="M3 8.500A15 15 0 0130.500 12H16z" fill="#d93a2b" /><path d="M3 8.500A15 15 0 0015 31l6-11-5-4z" fill="#3c9e45" /><path d="M31 12a15 15 0 01-16 19l6-11-1-8z" fill="#f7d63b" /><circle cx="16" cy="16" r="7" fill="#e8eef4" /><circle cx="16" cy="16" r="5.500" fill="#3d7fd6" /></svg>
    </button>
    <button class="app open active" aria-label="Multisim">
      <svg viewBox="0 0 32 32"><path d="M11 5l3-1 17 3-5 9-17-4z" fill="#1b2a80" /><path d="M9 9l18 4M8 12l16 4M12 6l18 4" stroke="#d8dff0" stroke-width="1" fill="none" /><path d="M6 14l13 4M4 17l13 4M1 19l13 5M0 22l11 5" stroke="#1b2a80" stroke-width="2" fill="none" /><path d="M27 8h4M26 12h3" stroke="#e8a13a" stroke-width="2" /><path d="M19 17l6-2 6 2c0 7-2 12-6 14-4-2-6-7-6-14z" fill="#fff" /><path d="M20 18l5-2v7h-4.500z" fill="#2c78cc" /><path d="M25 16l5 2-.500 5H25z" fill="#f3c622" /><path d="M20.500 23H25v7c-2-1-4-4-4.500-7z" fill="#f3c622" /><path d="M25 23h4.500c-.500 3-2.500 6-4.500 7z" fill="#2c78cc" /></svg>
    </button>
    <button class="app open" aria-label="Remote keyboard">
      <svg viewBox="0 0 32 32"><path d="M6 1l22-1 3 2-2 22-20-2z" fill="#c9cfd8" /><path d="M8 3l20-1-1 19-17-2z" fill="#1238c4" /><path d="M18 3l10-1-1 18z" fill="#3f70ea" /><path d="M15 23h7l1 5h-8z" fill="#b4bac4" /><ellipse cx="19" cy="29" rx="9" ry="3" fill="#d7dbe1" /><path d="M0 8h22v10H0z" fill="#eaf5ff" stroke="#3f8fd4" /><path d="M2 10.500h18M2 13h18" stroke="#3f8fd4" stroke-width="1.500" stroke-dasharray="1.500 1" /><path d="M5 15.500h12" stroke="#3f8fd4" /></svg>
    </button>

    <div class="tray">
      <div class="media">
        <button aria-label="Previous"><svg viewBox="0 0 18 18"><circle cx="9" cy="9" r="8" /><path d="M8 6v6L4 9zM13 6v6L9 9z" /></svg></button>
        <button aria-label="Play"><svg viewBox="0 0 18 18"><circle cx="9" cy="9" r="8.500" /><path d="M6.500 4.500v9L13 9z" /></svg></button>
        <button aria-label="Next"><svg viewBox="0 0 18 18"><circle cx="9" cy="9" r="8" /><path d="M5 6v6l4-3zM10 6v6l4-3z" /></svg></button>
        <svg class="spk" viewBox="0 0 14 14"><path d="M2 5h3l4-4v12L5 9H2z" /><path class="arc" d="M10.500 5.500v3" /></svg>
        <input type="range" aria-label="Volume" min="0" max="100" bind:value={volume} />
        <svg class="spk" viewBox="0 0 14 14"><path d="M0 5h3l4-4v12L3 9H0z" /><path class="arc" d="M8.500 5c1 1 1 3 0 4M10.500 3c2 2 2 6 0 8M12.500 2c2 3 2 7 0 10" /></svg>
        <div class="mini">
          <button aria-label="Restore player"><svg viewBox="0 0 10 10"><path class="arc" d="M4.500 1.500h4v4h-4zM1.500 4.500h4v4h-4z" /></svg></button>
          <button aria-label="Player menu"><svg viewBox="0 0 10 10"><path d="M1 3h8L5 8z" /></svg></button>
        </div>
      </div>
      <svg class="note" viewBox="0 0 16 16"><path d="M1 4l4 2M2 14l4-3M5 16l2-3M12 15l-2-3M0 10l5-1" stroke="#fff" stroke-width="2" /><ellipse cx="6" cy="9" rx="4" ry="4" fill="#ddd" /><circle cx="10" cy="5" r="5" fill="#3fa535" stroke="#e8ffe8" /><path d="M7.500 5l2 2.500 3.500-4" stroke="#fff" stroke-width="1.500" fill="none" /></svg>
      <svg class="note" viewBox="0 0 16 16"><path d="M1 1h5M1 4h5M2 7h4M3 10h3M5 13h2" stroke="#8ea0ff" stroke-width="2" /><path d="M8 0h7v10c0 3-3 5-6 6l-1-2z" fill="#5a6fe0" /><path d="M12 0h3v10l-3 4z" fill="#8fa2ff" /></svg>
      <svg class="note" viewBox="0 0 16 16"><circle cx="5" cy="5" r="5" fill="#e0e0e0" /><circle cx="11" cy="11" r="5" fill="#cfcfcf" /><circle cx="8" cy="8" r="6.500" fill="#ececec" /><path d="M5 5l6 6M11 5l-6 6" stroke="#8b8b8b" stroke-width="2.500" /></svg>
      <svg class="note" viewBox="0 0 16 16"><path d="M2.500 1v15" stroke="#fff" stroke-width="1.500" /><path d="M4 2c4-2 5 2 10 0v8c-5 2-6-2-10 0z" fill="#fff" /><circle cx="11" cy="11" r="4.500" fill="#d8281c" stroke="#fff" stroke-width=".500" /><path d="M9 9l4 4M13 9l-4 4" stroke="#fff" stroke-width="1.500" /></svg>
      <svg class="note" viewBox="0 0 16 16"><path d="M0 0h16v16H0z" fill="#24507e" stroke="#9db8d4" /><circle cx="7" cy="7.500" r="4" fill="none" stroke="#fff" stroke-width="2" /><path d="M11.500 11.500h2l-2 2.500h2" stroke="#fff" fill="none" /></svg>
      <svg class="note" viewBox="0 0 16 16"><path d="M2 13v2M5 11v4M8 9v6M11 6v9M14 3v12" stroke="#fff" stroke-width="2" /></svg>
      <svg class="note" viewBox="0 0 16 16"><path d="M2 3h8v11H2zM4 1h4" fill="none" stroke="#fff" stroke-width="1.500" /><path d="M8 5h7v3l-2 3h-3L8 8z" fill="#fff" /><path d="M10 2v3M13 2v3M11.500 11v4H7" stroke="#fff" fill="none" stroke-width="1.500" /></svg>
      <svg class="note" viewBox="0 0 16 16"><path d="M2 5h3l4-4v14l-4-4H2z" fill="#fff" /><path d="M11.500 5c1.500 2 1.500 4 0 6" stroke="#fff" fill="none" stroke-width="1.500" /></svg>
      <div class="clock"><time>12:40</time><time>21/06/2010</time></div>
      <button class="peek" aria-label="Show desktop"></button>
    </div>
  </div>
</div>

<style>
  :global(body) {
    background: #f0f0f0;
  }
  .screen {
    --face: #f0f0f0;
    --shadow: #a0a0a0;
    --dark: #696969;
    display: flex;
    flex-direction: column;
    min-height: 100vh;
    background: var(--face);
    color: #000;
    font-family: Roboto, 'Liberation Sans', sans-serif;
    font-size: 12px;
    line-height: 16px;
    white-space: nowrap;
    overflow: hidden;
  }
  .screen * {
    box-sizing: border-box;
  }
  button {
    display: flex;
    align-items: center;
    justify-content: center;
    padding: 0;
    border: 0;
    background: none;
    color: inherit;
    font: inherit;
  }
  h1,
  h2,
  ul {
    margin: 0;
    padding: 0;
    font: inherit;
    list-style: none;
  }
  .raised {
    width: 14px;
    height: 14px;
    background: var(--face);
    border: 1px solid;
    border-color: #fff var(--dark) var(--dark) #fff;
    box-shadow: inset -1px -1px var(--shadow);
  }
  .raised svg {
    width: 12px;
    height: 12px;
    shape-rendering: crispEdges;
  }
  .ico {
    width: 17px;
    height: 17px;
    fill: none;
    stroke: currentColor;
  }

  .titlebar {
    display: flex;
    height: 22px;
    padding-right: 3px;
    background:
      radial-gradient(ellipse 280px 26px at 230px 12px, #a9c1e6 50%, transparent),
      linear-gradient(90deg, #7fa3d8 0, #7da1d6 33%, #4174bf 36%, #3263ac 43%, #4a7ec8 52%, #3566b0 60%, #4b80ca 72%, #3767b1 85%, #4a7cc6 100%);
    border-bottom: 1px solid #1d3360;
  }
  .logo {
    width: 17px;
    height: 16px;
  }
  .titlebar .logo {
    margin-top: 3px;
  }
  h1 {
    flex: 1;
    margin-left: 4px;
    line-height: 22px;
  }
  .caption {
    display: flex;
    height: 18px;
    border: 1px solid #1f2f52;
    border-top: 0;
    border-radius: 0 0 5px 5px;
    overflow: hidden;
  }
  .caption button {
    width: 27px;
    background: linear-gradient(#b4c6e0, #8ba6cf 45%, #45659c 50%, #6f95c8);
    border-right: 1px solid #263b66;
  }
  .caption .close {
    width: 47px;
    border: 0;
    background: linear-gradient(#e0a294, #cf6c58 45%, #a8200e 50%, #d66a4c);
  }
  .caption svg,
  .meter-title button svg {
    width: 14px;
    height: 14px;
    fill: #fff;
    stroke: #46506a;
  }
  .caption .hole {
    fill: #46628f;
  }

  .menubar {
    display: flex;
    align-items: center;
    gap: 13px;
    height: 26px;
    padding: 0 3px 1px;
    border-top: 1px solid #fff;
    border-bottom: 1px solid var(--shadow);
  }
  .doc {
    display: flex;
    margin-right: -7px;
  }
  .child {
    display: flex;
    gap: 2px;
    margin: 4px 0 0 auto;
  }

  .row {
    display: flex;
    height: 28px;
  }
  .bar {
    position: relative;
    display: flex;
    align-items: center;
    padding: 0 2px 1px 11px;
    border: 1px solid;
    border-color: #fff var(--shadow) var(--shadow) transparent;
    border-left: 0;
  }
  .bar::before {
    content: '';
    position: absolute;
    left: 2px;
    top: 1px;
    bottom: 1px;
    width: 6px;
    background: linear-gradient(90deg, #fff 1px, #f0f0f0 1px, #f0f0f0 2px, #a0a0a0 2px) 0 0 / 3px 100%;
  }
  .tool {
    width: 23px;
    height: 23px;
  }
  .off,
  .inst {
    color: #9d9d9d;
  }
  .off .ico {
    filter: drop-shadow(1px 1px 0 #fff);
  }
  .down {
    background: #f8f8f8;
    border: 1px solid;
    border-color: var(--shadow) #fff #fff var(--shadow);
  }
  .sep {
    width: 2px;
    height: 22px;
    margin: 0 3px;
    border-left: 1px solid var(--shadow);
    border-right: 1px solid #fff;
  }
  .more {
    width: 11px;
    height: 22px;
  }
  .more svg {
    width: 7px;
    height: 4px;
  }
  .combo {
    position: relative;
    margin: 0 2px;
  }
  .combo select {
    display: block;
    appearance: none;
    width: 147px;
    height: 21px;
    padding: 0 4px;
    background: #fff;
    border: 2px solid;
    border-color: var(--dark) #e3e3e3 #e3e3e3 var(--dark);
    border-radius: 0;
    color: #000;
    font: inherit;
  }
  .drop {
    position: absolute;
    display: flex;
    align-items: center;
    justify-content: center;
    top: 1px;
    right: 1px;
    width: 17px;
    height: 19px;
    pointer-events: none;
  }
  .drop svg {
    width: 7px;
    height: 4px;
  }
  .switches {
    gap: 4px;
    padding: 0 3px 1px 13px;
  }
  .switches svg {
    width: 32px;
    height: 17px;
    shape-rendering: crispEdges;
  }

  .work {
    flex: 1;
    display: flex;
    min-height: 0;
  }
  .dock {
    display: flex;
    flex-direction: column;
    flex: 0 0 197px;
    padding: 2px 10px 4px 4px;
    border-top: 2px solid var(--shadow);
    border-bottom: 1px solid var(--shadow);
    overflow: hidden;
  }
  .dock-title {
    display: flex;
    align-items: center;
    gap: 2px;
    height: 16px;
    margin-bottom: 4px;
  }
  h2 {
    flex: 1;
    height: 16px;
    padding-left: 2px;
    background: linear-gradient(90deg, #bfcddb, #d7e4f2);
    color: #434e5c;
  }
  .dock-box {
    flex: 1;
    display: flex;
    flex-direction: column;
    padding: 0 2px 1px 0;
    border: 1px solid;
    border-color: var(--dark) var(--dark) var(--dark) var(--shadow);
  }
  .dock-tools {
    display: flex;
    justify-content: flex-end;
    gap: 3px;
    height: 27px;
    padding: 2px 3px;
    border-bottom: 1px solid #fff;
    align-items: center;
  }
  .tree {
    flex: 1;
    background: #fff;
    border: 1px solid;
    border-color: var(--dark) #e3e3e3 #e3e3e3 var(--dark);
    overflow: hidden;
  }
  .tree button {
    justify-content: flex-start;
    width: 100%;
    height: 18px;
    padding-left: 1px;
  }
  .tree .sheet {
    padding-left: 3px;
  }
  .tree .selected {
    background: var(--face);
  }
  .hscroll {
    display: flex;
    align-items: center;
    justify-content: space-between;
    height: 17px;
    padding: 0 7px;
    background: #f2f2f2;
  }
  .hscroll svg {
    width: 4px;
    height: 7px;
    fill: #333;
  }
  .thumb {
    display: flex;
    align-items: center;
    justify-content: center;
    gap: 2px;
    border: 1px solid #979797;
    border-radius: 2px;
  }
  .hscroll .thumb {
    width: 100px;
    height: 15px;
    margin-left: 28px;
    background: linear-gradient(#f4f4f4, #dcdcdc 50%, #c4c4c8);
  }
  .hscroll i {
    width: 1px;
    height: 7px;
    background: #444;
  }
  .dock-tabs {
    display: flex;
    align-items: flex-start;
    gap: 1px;
    height: 23px;
    font-family: 'Liberation Sans', sans-serif;
    font-size: 11px;
  }
  .dock-tabs button {
    height: 18px;
    margin-top: 3px;
    padding: 0 3px;
    border: 1px solid;
    border-color: var(--dark) var(--dark) var(--dark) #fff;
    box-shadow: inset -1px -1px var(--shadow);
  }
  .dock-tabs .current {
    height: 23px;
    margin-top: 0;
    padding: 5px 5px 0;
    border-top: 0;
  }

  .mdi {
    position: relative;
    flex: 1;
    display: flex;
    flex-direction: column;
    min-width: 0;
  }
  .frame {
    flex: 1;
    display: flex;
    padding: 3px 2px 5px 3px;
    border: 1px solid var(--dark);
    border-bottom: 0;
    box-shadow: inset 1px 1px #fff;
  }
  .canvas {
    flex: 1;
    display: flex;
    min-width: 0;
    background: #ababab;
    border: 2px solid;
    border-color: #808080 #fff #fff #808080;
  }
  .page {
    flex: none;
    width: 961px;
    height: 615px;
  }
  .border {
    fill: #808080;
  }
  .mark text {
    fill: #8593a3;
    font: 10px 'Liberation Sans', sans-serif;
    text-anchor: middle;
  }
  .part {
    stroke: #000;
    fill: none;
  }
  .part .arrow {
    fill: #000;
  }
  .labels {
    font: bold 13px 'Liberation Sans', sans-serif;
  }
  .big {
    font-size: 14px;
  }
  .blue,
  .chip text {
    fill: #1414d8;
  }
  .net {
    fill: #e81414;
  }
  .chip {
    fill: none;
    stroke: #00f;
  }
  .chip text {
    stroke: none;
    font: 10px 'Liberation Mono', monospace;
  }
  .chip .end {
    text-anchor: end;
  }
  .wire path {
    fill: none;
    stroke: #f00;
  }
  .wire circle {
    fill: #f00;
  }
  .contact {
    fill: #fff;
    stroke: #00f;
  }
  .vscroll {
    display: flex;
    flex-direction: column;
    align-items: center;
    width: 18px;
    margin-left: auto;
    padding: 7px 0;
    background: #f2f2f2;
    border-left: 1px solid #fff;
  }
  .vscroll svg {
    width: 7px;
    height: 4px;
    fill: #333;
  }
  .vscroll .thumb {
    flex: 1;
    flex-direction: column;
    width: 15px;
    margin: 92px 0 6px;
    background: linear-gradient(90deg, #f4f4f4, #dcdcdc 50%, #c4c4c8);
  }
  .vscroll i {
    width: 7px;
    height: 1px;
    background: #444;
  }

  .sheets {
    display: flex;
    justify-content: space-between;
    height: 24px;
  }
  .sheet-tabs {
    display: flex;
    align-items: flex-start;
    flex: 1;
    border-left: 1px solid var(--dark);
  }
  .sheet-tabs::after {
    content: '';
    flex: 1;
    border-top: 1px solid var(--dark);
  }
  .sheet-tabs button {
    gap: 3px;
    height: 22px;
    padding: 0 4px 0 5px;
    border-top: 1px solid var(--dark);
    border-right: 1px solid #000;
    border-bottom: 1px solid #000;
    border-bottom-left-radius: 5px;
  }
  .sheet-tabs .current {
    height: 24px;
    padding: 1px 8px 0 4px;
    border-top-color: transparent;
    border-right-width: 2px;
    border-bottom-width: 2px;
  }
  .pager {
    display: flex;
    gap: 1px;
    padding: 5px 3px 0 0;
    border-top: 1px solid var(--dark);
  }
  .pager .raised {
    width: 15px;
    height: 15px;
  }

  .meter {
    position: absolute;
    right: 134px;
    top: 90px;
    width: 168px;
    padding: 0 7px 6px;
    background: linear-gradient(100deg, #b8ccec 0, #b4c6e6 25%, #94a5c0 45%, #a3b4d2 80%, #a9bde0);
    border: 1px solid #2d3848;
    border-radius: 7px;
    box-shadow:
      inset 0 0 0 1px #dfe9f8,
      0 0 6px 2px rgba(0, 0, 0, 0.4);
  }
  .meter-title {
    display: flex;
    align-items: center;
    gap: 4px;
    height: 28px;
  }
  .meter-title button {
    align-self: flex-start;
    width: 47px;
    height: 18px;
    margin-left: auto;
    border: 1px solid #6a7b98;
    border-top: 0;
    border-radius: 0 0 5px 5px;
    background: #9fb0cc;
  }
  .meter-body {
    position: relative;
    display: flex;
    flex-direction: column;
    align-items: center;
    height: 134px;
    background: var(--face);
    border: 1px solid #3a4556;
    outline: 1px solid #dfe9f8;
    font: 11px/14px 'Liberation Sans', sans-serif;
  }
  .display {
    width: 142px;
    height: 23px;
    margin: 4px 0;
    background: #000;
    border: 1px solid #444;
    box-shadow:
      0 0 0 2px #f4f4f4,
      0 0 0 3px #888;
    color: #fff;
    font-size: 16px;
    line-height: 21px;
    text-align: center;
  }
  .group {
    display: flex;
    align-items: center;
    justify-content: center;
    gap: 7px;
    width: 140px;
    height: 29px;
    border: 1px solid var(--shadow);
    box-shadow: inset 1px 1px #fff;
  }
  .group .raised {
    width: 25px;
    height: 20px;
  }
  .wave {
    width: 95px;
    height: 23px;
    border-top-color: #fff;
  }
  .group.wave .raised {
    width: 37px;
    height: 16px;
  }
  .wave svg {
    width: 24px;
    height: 10px;
    fill: none;
    stroke: #000;
    stroke-width: 2;
    shape-rendering: auto;
  }
  .raised.pressed {
    background: #fafafa;
    border-color: var(--dark) #fff #fff var(--dark);
    box-shadow: inset 1px 1px var(--shadow);
  }
  .terminals {
    display: flex;
    align-items: flex-end;
    justify-content: space-between;
    width: 140px;
    margin-top: 12px;
  }
  .terminal {
    display: flex;
    flex-direction: column;
    align-items: center;
  }
  .terminal svg {
    width: 12px;
    height: 12px;
    margin-bottom: 4px;
    fill: none;
    stroke: #888;
  }
  .terminal .pin {
    fill: #888;
  }
  .raised.set {
    width: 57px;
    height: 16px;
  }
  .grip {
    position: absolute;
    right: 0;
    bottom: 0;
    width: 12px;
    height: 12px;
    fill: #b8b8b8;
  }

  .instruments {
    flex: 0 0 27px;
    border-top: 1px solid var(--shadow);
    border-bottom: 1px solid var(--shadow);
  }
  .inst-bar {
    display: flex;
    flex-direction: column;
    align-items: center;
    padding: 12px 1px 2px 0;
    border-right: 1px solid var(--shadow);
    border-bottom: 1px solid var(--shadow);
    background: linear-gradient(#fff 1px, #f0f0f0 1px, #f0f0f0 3px, #a0a0a0 3px, #a0a0a0 4px, #fff 4px, #fff 5px, #f0f0f0 5px, #f0f0f0 8px, #a0a0a0 8px, #a0a0a0 9px, transparent 9px) 0 2px no-repeat;
  }
  .inst {
    width: 24px;
    height: 22px;
  }
  .inst .ico {
    filter: drop-shadow(1px 1px 0 #fff);
  }
  .inst.live,
  .fly.live {
    color: #000;
  }
  hr {
    width: 23px;
    height: 2px;
    margin: 3px 0;
    border: 0;
    border-top: 1px solid var(--shadow);
    border-bottom: 1px solid #fff;
  }
  .fly {
    height: 12px;
    color: #a0a0a0;
  }
  .fly svg {
    width: 3px;
    height: 6px;
    fill: currentColor;
  }

  .status {
    display: grid;
    grid-template-columns: 156px 180px 180px 62px;
    justify-content: end;
    gap: 3px;
    height: 20px;
    padding-top: 3px;
  }
  .pane {
    padding-left: 1px;
    border-top: 1px solid var(--shadow);
    border-left: 1px solid var(--shadow);
    overflow: hidden;
  }
  .leds {
    display: flex;
    align-items: center;
    gap: 2px;
    padding-left: 3px;
  }
  .leds i {
    width: 6px;
    height: 13px;
    border: 1px solid;
    border-color: var(--shadow) #fff #fff var(--shadow);
  }
  .leds .lit {
    background: #00f000;
  }

  .taskbar {
    display: flex;
    align-items: center;
    height: 40px;
    background: linear-gradient(90deg, #0c2f5d, #01235a 30%, #01245c 55%, #001c49 75%);
    border-top: 1px solid #0a1830;
    box-shadow: inset 0 1px #4e6c98;
    color: #fff;
  }
  .start svg {
    width: 40px;
    height: 38px;
  }
  .start {
    padding-left: 7px;
  }
  .app {
    width: 58px;
    height: 38px;
    margin-right: 4px;
    border-radius: 3px;
  }
  .app.first {
    margin-left: 13px;
  }
  .app svg {
    width: 32px;
    height: 32px;
  }
  .open {
    background: linear-gradient(135deg, #71819f, #33496f 45%, #1a3562 50%, #2d4a7c);
    border: 1px solid #8395b5;
  }
  .active {
    background: linear-gradient(135deg, #c8d1e0, #8f9fbb 45%, #6b7fa4 50%, #8fa2c2);
    border-color: #d0dae8;
  }
  .tray {
    display: flex;
    align-items: center;
    gap: 8px;
    height: 39px;
    margin-left: auto;
  }
  .media {
    display: flex;
    align-items: center;
    gap: 1px;
    width: 152px;
    height: 25px;
    margin-right: 4px;
    padding: 0 2px;
    background: linear-gradient(#c4c4c4, #8c8c8c);
    border: 1px solid #6a6a6a;
    border-radius: 2px;
  }
  .media svg {
    width: 18px;
    height: 18px;
    fill: #333;
  }
  .media circle {
    fill: #e6e6e6;
    stroke: #666;
  }
  .media .spk {
    width: 12px;
    height: 14px;
  }
  .media .arc {
    fill: none;
    stroke: #333;
  }
  .media input {
    appearance: none;
    flex: 1;
    min-width: 0;
    height: 3px;
    margin: 0;
    background: #555;
    border-radius: 2px;
  }
  .media input::-webkit-slider-thumb {
    appearance: none;
    width: 9px;
    height: 9px;
    background: radial-gradient(#444 2px, #ddd 2px);
    border: 1px solid #444;
    border-radius: 50%;
  }
  .media .mini svg {
    width: 8px;
    height: 8px;
  }
  .mini {
    display: flex;
    flex-direction: column;
    gap: 1px;
  }
  .mini button {
    width: 10px;
    height: 10px;
    border: 1px solid #555;
    background: #bbb;
  }
  .note {
    width: 16px;
    height: 16px;
  }
  .clock {
    display: flex;
    flex-direction: column;
    align-items: center;
    gap: 1px;
    margin-left: 4px;
  }
  .peek {
    width: 14px;
    height: 38px;
    margin-left: 4px;
    background: linear-gradient(135deg, #5a6f94, #14305c 60%);
    border: 1px solid #7d8eac;
  }
</style>
